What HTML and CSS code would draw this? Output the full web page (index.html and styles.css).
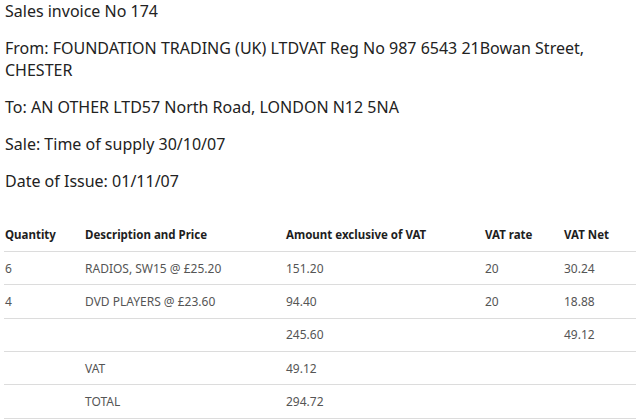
FILE: index.html
```html
<!DOCTYPE html>
<html lang="en">
<head>
    <meta charset="UTF-8">
    <meta name="viewport" content="width=device-width, initial-scale=1.0">
    <title>Sales invoice No 174</title>
    <link rel="stylesheet" href="styles.css">
</head>
<body>
    <div class="invoice">
        <p class="line">Sales invoice No 174</p>
        <p class="line">From: FOUNDATION TRADING (UK) LTDVAT Reg No 987 6543 21Bowan Street, CHESTER</p>
        <p class="line">To: AN OTHER LTD57 North Road, LONDON N12 5NA</p>
        <p class="line">Sale: Time of supply 30/10/07</p>
        <p class="line">Date of Issue: 01/11/07</p>

        <table class="items">
            <colgroup>
                <col class="col-qty">
                <col class="col-desc">
                <col class="col-amount">
                <col class="col-rate">
                <col class="col-net">
            </colgroup>
            <thead>
                <tr>
                    <th>Quantity</th>
                    <th>Description and Price</th>
                    <th>Amount exclusive of VAT</th>
                    <th>VAT rate</th>
                    <th>VAT Net</th>
                </tr>
            </thead>
            <tbody>
                <tr>
                    <td>6</td>
                    <td>RADIOS, SW15 @ £25.20</td>
                    <td>151.20</td>
                    <td>20</td>
                    <td>30.24</td>
                </tr>
                <tr>
                    <td>4</td>
                    <td>DVD PLAYERS @ £23.60</td>
                    <td>94.40</td>
                    <td>20</td>
                    <td>18.88</td>
                </tr>
                <tr>
                    <td></td>
                    <td></td>
                    <td>245.60</td>
                    <td></td>
                    <td>49.12</td>
                </tr>
                <tr>
                    <td></td>
                    <td>VAT</td>
                    <td>49.12</td>
                    <td></td>
                    <td></td>
                </tr>
                <tr>
                    <td></td>
                    <td>TOTAL</td>
                    <td>294.72</td>
                    <td></td>
                    <td></td>
                </tr>
            </tbody>
        </table>
    </div>
</body>
</html>
```

FILE: styles.css
```css
* {
    box-sizing: border-box;
    margin: 0;
    padding: 0;
}

body {
    font-family: "Noto Sans", Arial, sans-serif;
    background-color: #ffffff;
    color: #222;
}

.invoice {
    padding: 0 4px 0 4px;
}

.line {
    font-size: 16px;
    line-height: 22px;
    margin-bottom: 15px;
    padding-left: 1px;
}

.items {
    width: 632px;
    border-collapse: collapse;
    table-layout: fixed;
    margin-top: 26px;
}

.col-qty { width: 80px; }
.col-desc { width: 201px; }
.col-amount { width: 199px; }
.col-rate { width: 79px; }
.col-net { width: 73px; }

.items th,
.items td {
    text-align: left;
    height: 33.4px;
    padding: 0 0 0 1px;
    border-bottom: 1px solid #dcdcdc;
    vertical-align: middle;
}

.items th {
    font-size: 11.5px;
    font-weight: bold;
    color: #1e1e1e;
}

.items td {
    font-size: 12px;
    color: #555;
}
```
